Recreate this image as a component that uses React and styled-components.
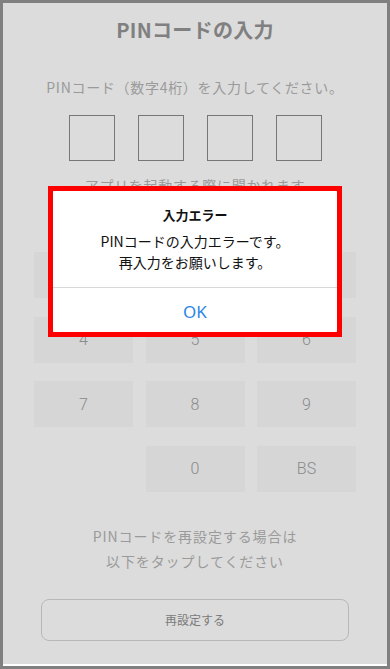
import React from 'react'
import styled, { createGlobalStyle } from 'styled-components';

const GlobalStyle = createGlobalStyle`
    html, body {
        margin: 0;
        padding: 0;
        background: #808080;
    }
    body {
        padding: 3px 3px 0 3px;
        font-family: "Noto Sans CJK JP", "Noto Sans", sans-serif;
    }
`

const Screen = styled.div`
    position: relative;
    height: 663px;
    box-sizing: border-box;
    background: #dcdcdc;
    border-bottom: 2px solid #ffffff;
    display: flex;
    flex-direction: column;
    align-items: center;
    padding-top: 13px;
`

const Title = styled.h1`
    margin: 0;
    font-size: 20px;
    line-height: 28px;
    font-weight: bold;
    letter-spacing: 0.3px;
    color: #808080;
`

const Lead = styled.p`
    margin: ${props => props.$top}px 0 0 0;
    font-size: 14px;
    line-height: 20px;
    letter-spacing: 0.7px;
    color: #9a9a9a;
`

const PinRow = styled.div`
    display: flex;
    gap: 23px;
    margin-top: 18px;
`

const PinBox = styled.div`
    width: 46px;
    height: 46px;
    box-sizing: border-box;
    border: 1px solid #777777;
`

const Keypad = styled.div`
    display: grid;
    grid-template-columns: repeat(3, 99px);
    grid-auto-rows: 46px;
    column-gap: 12.5px;
    row-gap: 18.5px;
    margin-top: 57px;
`

const Key = styled.div`
    display: flex;
    align-items: center;
    justify-content: center;
    background: ${props => props.$empty ? 'transparent' : '#d6d6d6'};
    color: #8a8a8a;
    font-family: Roboto, "Noto Sans", sans-serif;
    font-weight: 300;
    font-size: 16px;
`

const Note = styled.p`
    margin: 32px 0 0 0;
    font-size: 14px;
    line-height: 25px;
    letter-spacing: 0.9px;
    color: #9a9a9a;
    text-align: center;
`

const ResetButton = styled.button`
    margin-top: 25px;
    width: 308px;
    height: 42px;
    background: transparent;
    border: 1px solid #b8b8b8;
    border-radius: 8px;
    font-family: "Noto Sans CJK JP", sans-serif;
    font-size: 12px;
    color: #7a7a7a;
`

const Alert = styled.div`
    position: absolute;
    left: 47px;
    top: 185px;
    width: 290px;
    height: 147px;
    background: #ffffff;
    border-radius: 12px;
    display: flex;
    flex-direction: column;

    &::after {
        content: '';
        position: absolute;
        inset: -2px;
        border: 5px solid #ff0000;
    }
`

const AlertBody = styled.div`
    flex: 1;
    display: flex;
    flex-direction: column;
    align-items: center;
    padding-top: 18px;
    border-bottom: 1px solid #d8d8d8;
`

const AlertTitle = styled.div`
    font-size: 13px;
    line-height: 18px;
    font-weight: bold;
    color: #111111;
`

const AlertMessage = styled.div`
    margin-top: 7px;
    font-size: 14px;
    line-height: 21px;
    color: #111111;
    text-align: center;
`

const AlertButton = styled.div`
    height: 47px;
    display: flex;
    align-items: center;
    justify-content: center;
    font-family: "Noto Sans", sans-serif;
    font-size: 17px;
    color: #2a86e6;
`

const keys = ['1', '2', '3', '4', '5', '6', '7', '8', '9', '', '0', 'BS']

const App = () => {
    return (
        <>
            <GlobalStyle />
            <Screen>
                <Title>PINコードの入力</Title>
                <Lead $top={33}>PINコード（数字4桁）を入力してください。</Lead>
                <PinRow>
                    <PinBox />
                    <PinBox />
                    <PinBox />
                    <PinBox />
                </PinRow>
                <Lead $top={14}>アプリを起動する際に聞かれます</Lead>
                <Keypad>
                    {keys.map((k, i) => (
                        <Key key={i} $empty={k === ''}>{k}</Key>
                    ))}
                </Keypad>
                <Note>PINコードを再設定する場合は<br />以下をタップしてください</Note>
                <ResetButton>再設定する</ResetButton>

                <Alert>
                    <AlertBody>
                        <AlertTitle>入力エラー</AlertTitle>
                        <AlertMessage>PINコードの入力エラーです。<br />再入力をお願いします。</AlertMessage>
                    </AlertBody>
                    <AlertButton>OK</AlertButton>
                </Alert>
            </Screen>
        </>
    )
}

export default App
